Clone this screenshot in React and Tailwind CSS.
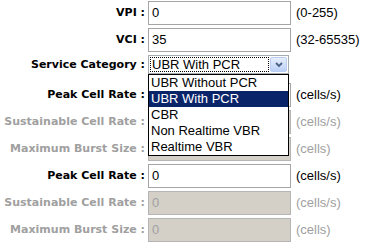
const rows = [
  { label: "VPI :", value: "0", unit: "(0-255)" },
  { label: "VCI :", value: "35", unit: "(32-65535)" },
];

const rateRows = [
  { label: "Peak Cell Rate :", value: "0", unit: "(cells/s)", disabled: false },
  { label: "Sustainable Cell Rate :", value: "0", unit: "(cells/s)", disabled: true },
  { label: "Maximum Burst Size :", value: "0", unit: "(cells)", disabled: true },
];

const options = ["UBR Without PCR", "UBR With PCR", "CBR", "Non Realtime VBR", "Realtime VBR"];

function Label({ children, disabled }) {
  return (
    <div
      className={`w-[145px] shrink-0 text-right text-[11px] font-bold whitespace-nowrap ${disabled ? "text-[#a0a0a0]" : "text-black"}`}
      style={{ fontFamily: '"DejaVu Sans", Verdana, sans-serif' }}
    >
      {children}
    </div>
  );
}

function InputRow({ label, value, unit, disabled, covered }) {
  return (
    <div className="flex items-center h-[24px]">
      <Label disabled={disabled}>{label}</Label>
      <div
        className={`ml-[3px] w-[143px] h-[24px] shrink-0 border flex items-center pl-[3px] text-[13px] ${
          disabled ? "bg-[#d4d0c8] border-[#b5b5b5] text-[#a0a0a0]" : "bg-white border-[#a5a5a5] text-black"
        }`}
      >
        {/* value sits under the open list */}
        {covered ? null : value}
      </div>
      <div className={`ml-[5px] text-[13px] whitespace-nowrap ${disabled ? "text-[#a0a0a0]" : "text-black"}`}>{unit}</div>
    </div>
  );
}

export default function App() {
  return (
    <div className="w-[392px] h-[251px] bg-white overflow-hidden pt-[1px] font-['Liberation_Sans',Arial,sans-serif]">
      <div className="flex flex-col gap-[3px]">
        {rows.map((r) => (
          <InputRow key={r.label} {...r} />
        ))}

        {/* Service category select, opened */}
        <div className="relative flex items-start h-[25px] z-10">
          <div className="h-[20px] flex items-center">
            <Label>Service Category :</Label>
          </div>
          <div className="relative ml-[3px] w-[141px] h-[19px] border border-[#a5acb2] bg-white flex items-center">
            <div className="ml-[1px] flex-1 h-[15px] border border-dotted border-[#000] flex items-center pl-[1px] text-[13px] text-black leading-none">
              UBR With PCR
            </div>
            <div className="w-[17px] h-[15px] mx-[1px] rounded-[2px] border border-[#b9cdf5] bg-gradient-to-b from-[#e6eefc] to-[#bcd0f6] flex items-center justify-center">
              <svg width="8" height="6" viewBox="0 0 8 6">
                <path d="M1 1 L4 4 L7 1" fill="none" stroke="#4d6185" strokeWidth="1.8" />
              </svg>
            </div>
            <div className="absolute left-[-1px] top-[18px] w-[141px] border border-black bg-white">
              {options.map((o, i) => (
                <div
                  key={o}
                  className={`h-[16px] pl-[2px] flex items-center text-[13px] whitespace-nowrap ${
                    i === 1 ? "bg-[#0a246a] text-white" : "text-black"
                  }`}
                >
                  {o}
                </div>
              ))}
            </div>
          </div>
        </div>

        {rateRows.map((r) => (
          <InputRow key={"a" + r.label} {...r} covered />
        ))}
        {rateRows.map((r) => (
          <InputRow key={"b" + r.label} {...r} />
        ))}
      </div>
    </div>
  );
}
